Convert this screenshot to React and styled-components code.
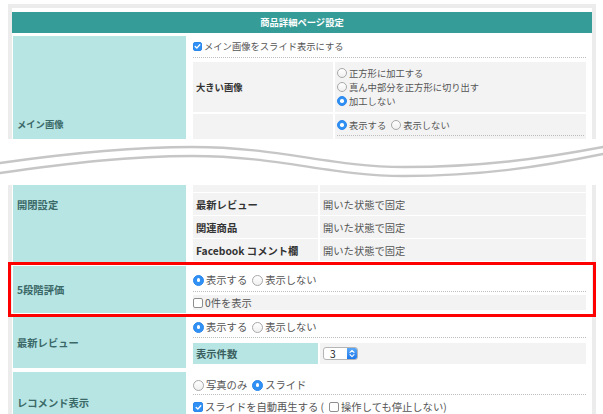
import React from 'react';
import styled, { createGlobalStyle } from 'styled-components';

const Global = createGlobalStyle`
  html, body { margin: 0; padding: 0; background: #fff; }
  body {
    font-family: "Noto Sans CJK JP", "Noto Sans", sans-serif;
    font-size: 9.3px;
    color: #555;
  }
`;

const Page = styled.div`
  width: 603px;
  height: 414px;
  overflow: hidden;
  background: #fff;
  padding-top: 4px;
  box-sizing: border-box;
`;

const Frame = styled.div`
  margin: 0 7px 0 8px;
  border: 4px solid #ececec;
  border-top-width: ${p => (p.$top ? '4px' : '0')};
  border-bottom-width: 0;
  padding-top: ${p => (p.$top ? '4px' : '0')};
  height: ${p => p.$h}px;
  overflow: ${p => (p.$clip ? 'hidden' : 'visible')};
  box-sizing: border-box;
  font-size: ${p => p.$fs}px;
  --mark: ${p => p.$mark}px;
`;

const Header = styled.div`
  height: 21px;
  line-height: 21px;
  background: #369c98;
  color: #fff;
  font-weight: bold;
  text-align: center;
`;

const Rows = styled.div`
  display: flex;
  flex-direction: column;
  gap: ${p => p.$gap}px;
  margin-top: ${p => p.$mt || 0}px;
`;

const Row = styled.div`
  display: grid;
  grid-template-columns: 173px 1fr;
  column-gap: 3px;
  padding-left: 1px;
  min-height: ${p => p.$min || 0}px;
  ${p => p.$mark && `outline: 3px solid #ff0000; outline-offset: 1px; position: relative; z-index: 1;`}
`;

const Label = styled.div`
  background: #b6e5e4;
  color: #3b6968;
  font-weight: bold;
  padding: ${p => (p.$top ? `${p.$top}px 4px 0` : '0 4px')};
  display: flex;
  align-items: ${p => (p.$top ? 'flex-start' : 'center')};
  line-height: 13px;
`;

const Value = styled.div`
  padding: ${p => p.$pad};
  padding-right: 6px;
  min-width: 0;
`;

const Line = styled.div`
  display: flex;
  align-items: center;
  line-height: 14px;
  padding-bottom: ${p => p.$pb || 0}px;
  margin-top: ${p => p.$mt || 0}px;
  border-bottom: ${p => (p.$dotted ? '1px dotted #bdbdbd' : '0')};
  white-space: nowrap;
`;

const Stack = styled.div`
  display: flex;
  flex-direction: column;
`;

const Sub = styled.div`
  display: grid;
  grid-template-columns: ${p => p.$cols}px 1fr;
  column-gap: 2px;
  row-gap: ${p => p.$rg}px;
  margin-top: ${p => p.$mt || 0}px;
`;

const SubLabel = styled.div`
  background: ${p => (p.$teal ? '#b6e5e4' : '#f3f3f3')};
  color: ${p => (p.$teal ? '#3b5f5e' : '#333')};
  font-weight: bold;
  padding: 0 3px;
  display: flex;
  align-items: center;
  height: ${p => (p.$h ? `${p.$h}px` : 'auto')};
  min-height: ${p => p.$min || 0}px;
  white-space: nowrap;
`;

const SubValue = styled.div`
  background: #f3f3f3;
  padding: ${p => p.$pad || '0 3px'};
  display: flex;
  flex-direction: column;
  justify-content: ${p => (p.$center ? 'center' : 'flex-start')};
  height: ${p => (p.$h ? `${p.$h}px` : 'auto')};
  min-height: ${p => p.$min || 0}px;
  box-sizing: border-box;
`;

const GrayBox = styled.div`
  background: #f3f3f3;
  height: 15px;
  margin-top: 3px;
  display: flex;
  align-items: center;
`;

const Option = styled.label`
  display: inline-flex;
  align-items: center;
  gap: 2px;
  margin-right: 5px;
`;

const RadioMark = styled.span`
  flex: none;
  width: var(--mark, 10px);
  height: var(--mark, 10px);
  border-radius: 50%;
  box-sizing: border-box;
  border: 1px solid ${p => (p.$on ? '#2b87ec' : '#a8a8a8')};
  background: ${p => (p.$on ? '#3090f3' : 'linear-gradient(#fff, #f0f0f0)')};
  display: inline-flex;
  align-items: center;
  justify-content: center;
  &::after {
    content: '';
    width: 3.6px;
    height: 3.6px;
    border-radius: 50%;
    background: #fff;
    display: ${p => (p.$on ? 'block' : 'none')};
  }
`;

const BoxMark = styled.span`
  flex: none;
  width: calc(var(--mark, 10px) - 1px);
  height: calc(var(--mark, 10px) - 1px);
  border-radius: 2px;
  box-sizing: border-box;
  border: 1px solid ${p => (p.$on ? '#2b87ec' : '#8e8e8e')};
  background: ${p => (p.$on ? '#3090f3' : '#fff')};
  display: inline-flex;
  align-items: center;
  justify-content: center;
`;

const Radio = ({ on, children }) => (
  <Option>
    <RadioMark $on={on} />
    {children}
  </Option>
);

const Check = ({ on, children }) => (
  <Option>
    <BoxMark $on={on}>
      {on && (
        <svg width="7" height="7" viewBox="0 0 7 7">
          <path d="M1.2 3.6 L2.8 5.1 L5.8 1.8" fill="none" stroke="#fff" strokeWidth="1.4" strokeLinecap="round" strokeLinejoin="round" />
        </svg>
      )}
    </BoxMark>
    {children}
  </Option>
);

const Select = styled.span`
  display: inline-flex;
  align-items: stretch;
  width: 35px;
  height: 13px;
  border: 1px solid #b5b5b5;
  border-radius: 3px;
  background: #fff;
  box-sizing: border-box;
  overflow: hidden;
  color: #222;
`;

const SelectText = styled.span`
  flex: 1;
  padding-left: 6px;
  line-height: 11px;
`;

const SelectArrow = styled.span`
  width: 10px;
  background: linear-gradient(#5aa8f8, #1f78ea);
  display: flex;
  align-items: center;
  justify-content: center;
`;

const Break = styled.div`
  height: 46px;
  display: flex;
`;

const Wave = () => (
  <svg width="603" height="46" viewBox="0 0 603 46">
    <g fill="none" stroke="#c6c6c6" strokeWidth="2.4" strokeLinecap="round">
      <path d="M0 24 C70 14 130 8 192 8 C280 8 330 28 404 28 C480 28 540 20 603 8" />
      <path d="M0 34 C70 24 130 17 192 17 C280 17 330 37 404 37 C480 37 540 28 603 15" />
    </g>
  </svg>
);

export default function App() {
  return (
    <>
      <Global />
      <Page>
        <Frame $top $clip $h={135} $fs={9.3} $mark={10}>
          <Header>商品詳細ページ設定</Header>
          <Rows $gap={3} $mt={3}>
            <Row $min={176}>
              <Label>メイン画像</Label>
              <Value $pad="3px 4px 0">
                <Line $dotted $pb={4}>
                  <Check on>メイン画像をスライド表示にする</Check>
                </Line>
                <Sub $cols={140} $rg={2} $mt={4}>
                  <SubLabel>大きい画像</SubLabel>
                  <SubValue $pad="4px 2px">
                    <Stack>
                      <Line><Radio>正方形に加工する</Radio></Line>
                      <Line><Radio>真ん中部分を正方形に切り出す</Radio></Line>
                      <Line><Radio on>加工しない</Radio></Line>
                    </Stack>
                  </SubValue>
                  <SubLabel $min={60} />
                  <SubValue $pad="4px 2px 0" $min={60}>
                    <Line $dotted $pb={3}>
                      <Radio on>表示する</Radio>
                      <Radio>表示しない</Radio>
                    </Line>
                  </SubValue>
                </Sub>
              </Value>
            </Row>
          </Rows>
        </Frame>

        <Break>
          <Wave />
        </Break>

        <Frame $h={240} $fs={10.3} $mark={11}>
          <Rows $gap={4}>
            <Row>
              <Label $top={13}>開閉設定</Label>
              <Value $pad="0 4px 1px">
                <Sub $cols={125} $rg={1}>
                  <SubLabel $h={7} />
                  <SubValue $h={7} />
                  <SubLabel $h={22}>最新レビュー</SubLabel>
                  <SubValue $h={22} $center>開いた状態で固定</SubValue>
                  <SubLabel $h={22}>関連商品</SubLabel>
                  <SubValue $h={22} $center>開いた状態で固定</SubValue>
                  <SubLabel $h={22}>Facebook コメント欄</SubLabel>
                  <SubValue $h={22} $center>開いた状態で固定</SubValue>
                </Sub>
              </Value>
            </Row>

            <Row $mark>
              <Label>5段階評価</Label>
              <Value $pad="7px 4px 3px">
                <Line $dotted $pb={4}>
                  <Radio on>表示する</Radio>
                  <Radio>表示しない</Radio>
                </Line>
                <GrayBox>
                  <Check>0件を表示</Check>
                </GrayBox>
              </Value>
            </Row>

            <Row>
              <Label>最新レビュー</Label>
              <Value $pad="3px 4px 4px">
                <Line $dotted $pb={3}>
                  <Radio on>表示する</Radio>
                  <Radio>表示しない</Radio>
                </Line>
                <Sub $cols={125} $rg={0} $mt={5}>
                  <SubLabel $teal $h={21}>表示件数</SubLabel>
                  <SubValue $h={21} $center $pad="0 3px">
                    <Select>
                      <SelectText>3</SelectText>
                      <SelectArrow>
                        <svg width="6" height="9" viewBox="0 0 6 9">
                          <path d="M1 3.4 L3 1.4 L5 3.4 M1 5.6 L3 7.6 L5 5.6" fill="none" stroke="#fff" strokeWidth="1.1" strokeLinecap="round" strokeLinejoin="round" />
                        </svg>
                      </SelectArrow>
                    </Select>
                  </SubValue>
                </Sub>
              </Value>
            </Row>

            <Row $min={60}>
              <Label>レコメンド表示</Label>
              <Value $pad="6px 4px 0">
                <Line $dotted $pb={2}>
                  <Radio>写真のみ</Radio>
                  <Radio on>スライド</Radio>
                </Line>
                <Line $mt={5}>
                  <Check on>スライドを自動再生する (</Check>
                  <Check>操作しても停止しない)</Check>
                </Line>
              </Value>
            </Row>
          </Rows>
        </Frame>
      </Page>
    </>
  );
}
